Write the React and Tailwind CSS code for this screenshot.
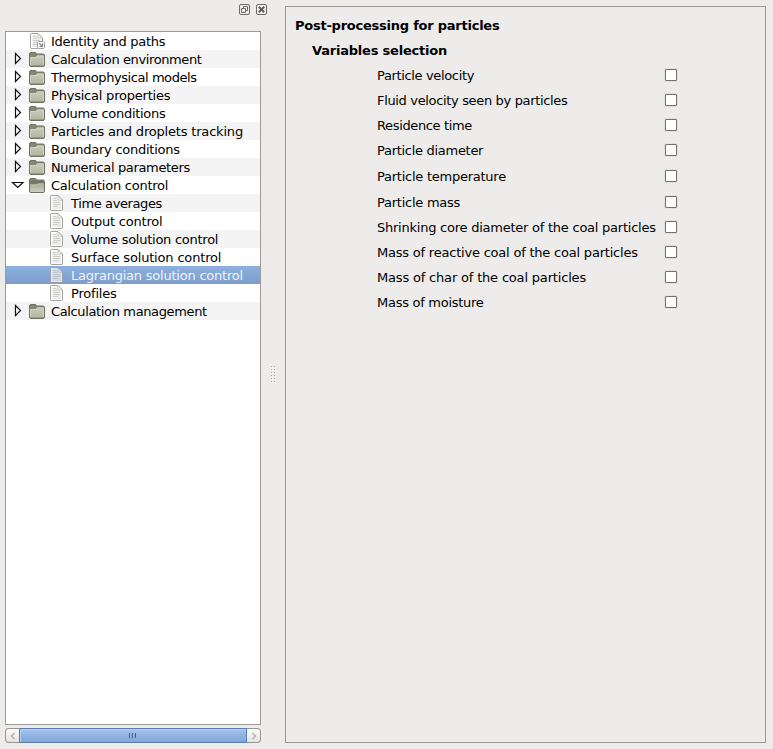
import React from 'react';

const tree = [
  { label: 'Identity and paths', kind: 'link', tracking: 'tracking-[-0.25px]' },
  { label: 'Calculation environment', kind: 'folder', tracking: 'tracking-[-0.39px]' },
  { label: 'Thermophysical models', kind: 'folder', tracking: 'tracking-[-0.43px]' },
  { label: 'Physical properties', kind: 'folder', tracking: 'tracking-[-0.21px]' },
  { label: 'Volume conditions', kind: 'folder', tracking: 'tracking-[-0.29px]' },
  { label: 'Particles and droplets tracking', kind: 'folder', tracking: 'tracking-[-0.19px]' },
  { label: 'Boundary conditions', kind: 'folder', tracking: 'tracking-[-0.26px]' },
  { label: 'Numerical parameters', kind: 'folder', tracking: 'tracking-[-0.35px]' },
  { label: 'Calculation control', kind: 'open', tracking: 'tracking-[-0.24px]' },
  { label: 'Time averages', kind: 'page', tracking: 'tracking-[-0.38px]' },
  { label: 'Output control', kind: 'page', tracking: 'tracking-[-0.21px]' },
  { label: 'Volume solution control', kind: 'page', tracking: 'tracking-[-0.26px]' },
  { label: 'Surface solution control', kind: 'page', tracking: 'tracking-[-0.17px]' },
  { label: 'Lagrangian solution control', kind: 'page', selected: true, tracking: 'tracking-[-0.22px]' },
  { label: 'Profiles', kind: 'page', tracking: 'tracking-[-0.19px]' },
  { label: 'Calculation management', kind: 'folder', tracking: 'tracking-[-0.36px]' },
];

const variables = [
  ['Particle velocity', 'h-[25px] tracking-[-0.35px]'],
  ['Fluid velocity seen by particles', 'h-[25px] tracking-[-0.34px]'],
  ['Residence time', 'h-[25px] tracking-[-0.36px]'],
  ['Particle diameter', 'h-[26px] tracking-[-0.29px]'],
  ['Particle temperature', 'h-[26px] tracking-[-0.25px]'],
  ['Particle mass', 'h-[25px] tracking-[-0.25px]'],
  ['Shrinking core diameter of the coal particles', 'h-[25px] tracking-[-0.24px]'],
  ['Mass of reactive coal of the coal particles', 'h-[25px] tracking-[-0.21px]'],
  ['Mass of char of the coal particles', 'h-[25px] tracking-[-0.18px]'],
  ['Mass of moisture', 'h-[25px] tracking-[-0.27px]'],
];

function Gradients() {
  return (
    <svg className="absolute h-0 w-0" aria-hidden="true">
      <defs>
        <linearGradient id="folderFill" x1="0" y1="0" x2="0" y2="1">
          <stop offset="0" stopColor="#cccdbd" />
          <stop offset="1" stopColor="#b2b5a0" />
        </linearGradient>
        <linearGradient id="openFill" x1="0" y1="0" x2="0" y2="1">
          <stop offset="0" stopColor="#a3a692" />
          <stop offset="1" stopColor="#cfd1c0" />
        </linearGradient>
        <linearGradient id="pageFill" x1="0" y1="0" x2="1" y2="1">
          <stop offset="0" stopColor="#f8f8f7" />
          <stop offset="1" stopColor="#e6e6e3" />
        </linearGradient>
      </defs>
    </svg>
  );
}

function FolderIcon({ open }) {
  return (
    <svg width="16" height="16" viewBox="0 0 16 16" className="block shrink-0">
      <path d="M.5 3q0-1.500 1.500-1.500H6q1 0 1.300 1l.2.500H14q1.500 0 1.500 1.500V14q0 1.500-1.500 1.500H2Q.5 15.500.5 14z" fill="#85886f" stroke="#6f725f" />
      {open ? (
        <>
          <path d="M1.500 3.500H14.500V6.500H1.500z" fill="#73765f" />
          <path d="M1 7.500H8L9 6.500H15V14Q15 15 14 15H2Q1 15 1 14z" fill="url(#openFill)" />
          <path d="M1.500 8H8.200L9.200 7H14.500" fill="none" stroke="#c3c5b4" />
        </>
      ) : (
        <>
          <path d="M1.500 6H7L8 4.500H14.500V14.500H1.500z" fill="url(#folderFill)" />
          <path d="M1.500 14V6.500H7.200L8.200 5H14.500V14" fill="none" stroke="#d3d4c5" />
        </>
      )}
    </svg>
  );
}

function PageIcon({ link, selected }) {
  return (
    <svg width="16" height="16" viewBox="0 0 16 16" className={selected ? 'block shrink-0 opacity-75' : 'block shrink-0'}>
      <path d="M1.500 1.500Q1.500.5 2.500.5H9L13.500 5V14.500Q13.500 15.500 12.500 15.500H2.500Q1.500 15.500 1.500 14.500z" fill="url(#pageFill)" stroke="#a1a19e" />
      <path d="M2.500 14.500V1.500H8.500M12.500 6V14.500H2.500" fill="none" stroke="#fff" />
      <path d="M9 1V5H13z" fill="#fdfdfc" stroke="#b5b5b1" strokeWidth=".7" />
      <path d="M4 3.500H7.500M4 5.500H8M4 7.500H11M4 9.500H11M4 11.500H9" stroke="#cdcdca" />
      {link && (
        <>
          <rect x="8.500" y="8.500" width="7" height="7" rx="1" fill="#f5f5f4" stroke="#a3a3a0" />
          <path d="M10.300 10.300L13 13M13.500 10.500V13.500H10.500" fill="none" stroke="#858582" strokeWidth="1.200" />
        </>
      )}
    </svg>
  );
}

function Expander({ open }) {
  return (
    <svg width="14" height="14" viewBox="0 0 14 14" className="block shrink-0">
      {open ? (
        <path d="M1.500 4.500H12L6.750 9.500z" fill="#fff" stroke="#111" strokeWidth="1.200" />
      ) : (
        <path d="M4.500 1.500V11.500L9.500 6.500z" fill="#fff" stroke="#111" strokeWidth="1.200" />
      )}
    </svg>
  );
}

function TreeRow({ item, striped }) {
  const bg = item.selected
    ? 'bg-linear-to-b from-[#8db0df] to-[#7d9ecb] text-[#edf3fb]'
    : striped ? 'bg-[#f4f4f4]' : 'bg-white';
  const isPage = item.kind === 'page';
  const hasArrow = item.kind === 'folder' || item.kind === 'open';
  return (
    <div className={`flex h-[18px] items-center pl-[5px] ${bg}`}>
      <div className="w-[18px] shrink-0">{hasArrow && <Expander open={item.kind === 'open'} />}</div>
      <div className={isPage ? 'ml-5 w-[22px] shrink-0' : 'w-[22px] shrink-0'}>
        {hasArrow ? <FolderIcon open={item.kind === 'open'} /> : <PageIcon link={item.kind === 'link'} selected={item.selected} />}
      </div>
      <span className={`h-[18px] leading-[20px] ${item.tracking}`}>{item.label}</span>
    </div>
  );
}

function DockButtons() {
  return (
    <div className="-mr-[6px] flex h-[27px] justify-end gap-[6px]">
      <svg width="11" height="11" viewBox="0 0 11 11" className="block">
        <rect x=".5" y=".5" width="10" height="10" rx="1.500" fill="#f2f1f0" stroke="#6d6b67" />
        <path d="M4.500 4.500V2.500H8.500V6.500H6.500M2.500 4.500H6.500V8.500H2.500z" fill="none" stroke="#6d6b67" />
      </svg>
      <svg width="11" height="11" viewBox="0 0 11 11" className="block">
        <rect x=".5" y=".5" width="10" height="10" rx="1.500" fill="#f2f1f0" stroke="#6d6b67" />
        <path d="M2.800 2.800L8.200 8.200M8.200 2.800L2.800 8.200" stroke="#5f5d5a" strokeWidth="2" />
      </svg>
    </div>
  );
}

function ScrollBar() {
  return (
    <div className="mt-[3px] flex h-[15px] w-[256px]">
      <div className="flex w-[14px] items-center justify-center rounded-l-[4px] border border-r-0 border-[#979591] bg-linear-to-b from-[#fcfcfc] to-[#e4e3e1]">
        <svg width="6" height="8" viewBox="0 0 6 8"><path d="M4.500 1L1.500 4L4.500 7" fill="none" stroke="#b4b2af" strokeWidth="1.500" /></svg>
      </div>
      <div className="flex w-[228px] items-center justify-center gap-[2px] border border-[#5b7dad] bg-linear-to-b from-[#a8c6ec] via-[#8fb3e1] to-[#84a6d5] pr-[2px] shadow-[inset_1px_1px_0_#b3cff2]">
        <i className="h-[5px] w-px bg-[#3e5f8d]" />
        <i className="h-[5px] w-px bg-[#3e5f8d]" />
        <i className="h-[5px] w-px bg-[#3e5f8d]" />
      </div>
      <div className="flex w-[14px] items-center justify-center rounded-r-[4px] border border-l-0 border-[#979591] bg-linear-to-b from-[#fcfcfc] to-[#e4e3e1]">
        <svg width="6" height="8" viewBox="0 0 6 8"><path d="M1.500 1L4.500 4L1.500 7" fill="none" stroke="#b4b2af" strokeWidth="1.500" /></svg>
      </div>
    </div>
  );
}

function SplitterGrip() {
  return (
    <svg width="6" height="18" viewBox="0 0 6 18" className="block">
      {[0, 3, 6, 9, 12, 15].map((y) => (
        <g key={y}>
          <path d={`M2 ${y + 1}h1v1h-1zM5 ${y + 1}h1v1h-1z`} fill="#fff" />
          <path d={`M1 ${y}h1v1h-1zM4 ${y}h1v1h-1z`} fill="#aaa8a5" />
        </g>
      ))}
    </svg>
  );
}

export default function App() {
  return (
    <div className="flex h-[749px] w-[773px] overflow-hidden bg-[#edeceb] font-['DejaVu_Sans',sans-serif] text-[13px] whitespace-nowrap text-black">
      <Gradients />
      <aside className="flex w-[261px] shrink-0 flex-col pt-1 pl-[5px]">
        <DockButtons />
        <div className="h-[694px] w-[256px] border border-[#9c9a97] bg-white">
          {tree.map((item, i) => (
            <TreeRow key={item.label} item={item} striped={i % 2 === 1} />
          ))}
        </div>
        <ScrollBar />
      </aside>
      <div className="flex w-6 shrink-0 flex-col items-center pt-[366px]">
        <SplitterGrip />
      </div>
      <main className="mt-[6px] h-[737px] w-[481px] shrink-0 border border-[#9c9a97] pt-[10px]">
        <h1 className="h-[25px] pl-[9px] leading-[18px] font-bold tracking-[-0.24px]">Post-processing for particles</h1>
        <h2 className="h-[20px] pl-[26px] leading-[18px] font-bold tracking-[-0.21px]">Variables selection</h2>
        {variables.map(([label, style]) => (
          <div key={label} className={`flex pt-[5px] pl-[91px] ${style}`}>
            <span className="w-[288px] shrink-0 leading-[18px]">{label}</span>
            <span className="mt-[2px] h-3 w-3 rounded-[1px] border border-[#74726e] bg-white shadow-[0_0_0_1px_#e2e1df]" />
          </div>
        ))}
      </main>
    </div>
  );
}
